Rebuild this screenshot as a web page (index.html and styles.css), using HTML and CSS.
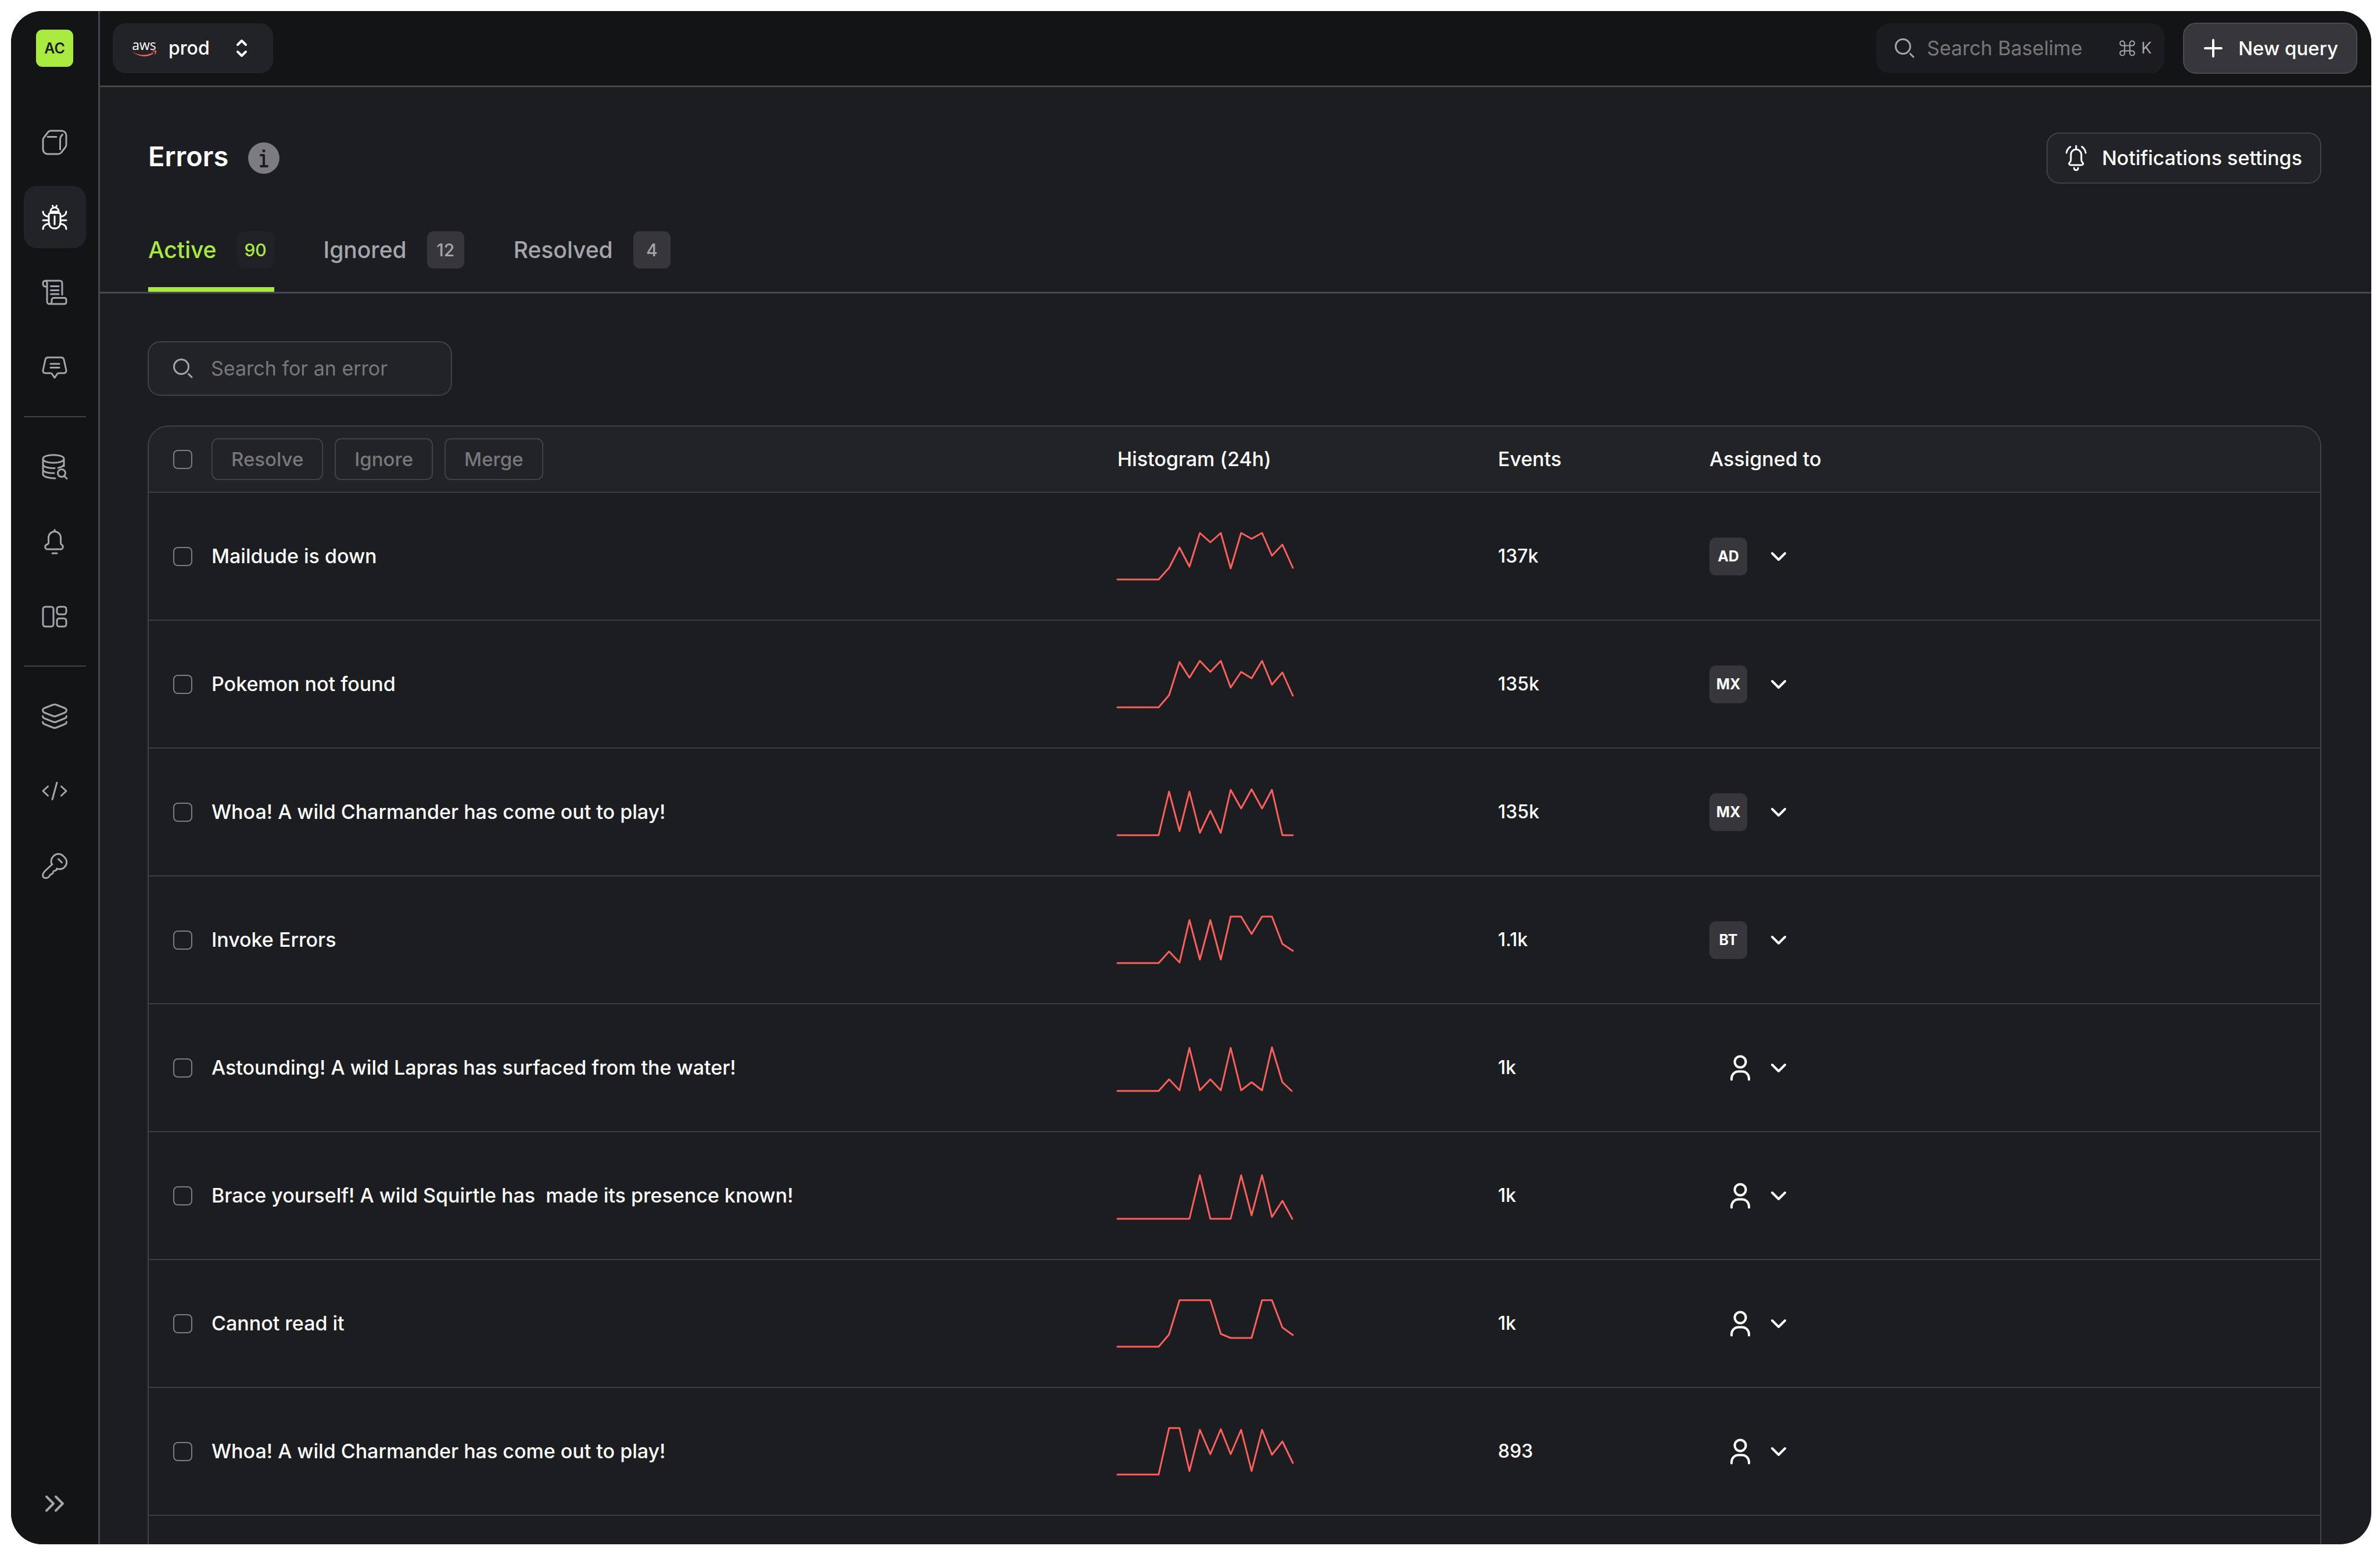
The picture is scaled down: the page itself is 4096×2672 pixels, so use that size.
FILE: index.html
```html
<!DOCTYPE html>
<html lang="en">
<head>
<meta charset="utf-8">
<title>Errors</title>
<meta name="viewport" content="width=device-width, initial-scale=1">
<link rel="stylesheet" href="styles.css">
</head>
<body>
<svg class="sprite" aria-hidden="true">
  <symbol id="cube" viewBox="0 0 48 48"><path d="M17 4H36a8 8 0 0 1 8 8V28q0 3-2 5l-7 9q-2 2-5 2H12a8 8 0 0 1-8-8V20q0-3 2-5l7-9q2-2 4-2zM12 14.500H27M33.500 36V20q0-6 4-9.500"/></symbol>
  <symbol id="bug" viewBox="0 0 48 48"><path d="M17 16.500H31a3 3 0 0 1 3 3V32c0 7-4 11-10 11s-10-4-10-11V19.500a3 3 0 0 1 3-3zM17 16v-2c0-4 3-7 7-7s7 3 7 7v2M17 14H31M22 7.500l-1.500-3.500M26 7.500l1.500-3.500M24 22V36M4 14c0 4 3 8 10 9M44 14c0 4-3 8-10 9M4 29H14M34 29H44M4 44c0-5 4-9 11-9M44 44c0-5-4-9-11-9"/></symbol>
  <symbol id="scroll" viewBox="0 0 48 48"><path d="M11 14H8a4 4 0 0 1-4-4V8a3.500 4 0 0 1 7 0V40a4 4 0 0 0 8 0V37a3.500 3.500 0 0 1 3.500-3.500H41a3 3 0 0 1 3 3V41a3 3 0 0 1-3 3H15M7.500 4H33a4 4 0 0 1 4 4V28M17.500 13.500H31M17.500 20.500H31M17.500 27H31"/></symbol>
  <symbol id="message" viewBox="0 0 48 48"><path d="M13 7H35a5 5 0 0 1 5 4l4 18a4 4 0 0 1-4 5H31q-2 0-3 2l-4 6-4-6q-1-2-3-2H8a4 4 0 0 1-4-5l4-18a5 5 0 0 1 5-4zM17 18H32M17 24.500H32"/></symbol>
  <symbol id="database" viewBox="0 0 48 48"><path d="M4 10.500c0-9 36-9 36 0s-36 9-36 0V37c0 4 10 7 21 7M40 10.500V23M4 20c0 5 12 7 20 6.500M40 20c-1 3-5 5-10 6M4 29c0 4 10 6.500 19 6M41 40.500l4 4"/><circle cx="36" cy="35" r="6.500"/></symbol>
  <symbol id="bell" viewBox="0 0 48 48"><path d="M24 3.500V6M13.500 17a10.500 10.500 0 0 1 21 0V26q0 2 2 3.500c3 2 2 7.500-2 7.500H11.500c-4 0-5-5.500-2-7.500q4-1.500 4-3.500zM20 44H28"/></symbol>
  <symbol id="layout" viewBox="0 0 48 48"><rect x="4" y="7" width="18" height="34" rx="4"/><rect x="28" y="7" width="16" height="13" rx="4"/><rect x="28" y="27" width="16" height="14" rx="4"/></symbol>
  <symbol id="layers" viewBox="0 0 48 48"><path d="M21.500 4.500q2.500-1 5 0L42 10.500q5 3.500 0 7.500L26.500 24q-2.500 1-5 0L6 18q-5-4 0-7.500zM3.500 24q0 3 3 4l15 6q2.500 1 5 0l15-6q3-1 3-4M3.500 34q0 3 3 4l15 6q2.500 1 5 0l15-6q3-1 3-4"/></symbol>
  <symbol id="code" viewBox="0 0 48 48"><path d="M12.500 16L4 24l8.500 8M35.500 16L44 24l-8.500 8M28 9.500L20 38.500"/></symbol>
  <symbol id="key" viewBox="0 0 48 48"><path d="M19 21C17 17 18 11 22 7c5-5 12-5 17 0l2 2c5 5 5 12 0 17-4 4-9 4-13.500 2.500q0 3-2.500 3.500c-4 0-3 2-4 4-1 3-4 1-5.500 4.500C14 44 10 45 7 44.500 4 44 3 41 4 38s2-4 4-6L20 21zM30.500 12L36.500 18"/></symbol>
  <symbol id="expand" viewBox="0 0 48 48"><path d="M10 12L22 24 10 36M26 12L38 24 26 36"/></symbol>
  <symbol id="search" viewBox="0 0 36 36"><circle cx="15" cy="15" r="12.500"/><path d="M27.500 27.500l5.500 5.500"/></symbol>
  <symbol id="command" viewBox="0 0 28 28"><path d="M9.500 9.500H18.500V18.500H9.500zM9.500 9.500H6a4 4 0 1 1 3.500-4zM18.500 9.500V5.500a4 4 0 1 1 3.500 4zM18.500 18.500H22a4 4 0 1 1-3.500 4zM9.500 18.500V22.500a4 4 0 1 1-3.500-4z"/></symbol>
  <symbol id="plus" viewBox="0 0 34 34"><path d="M17 3V31M3 17H31"/></symbol>
  <symbol id="alarm" viewBox="0 0 48 48"><path d="M24 3V7M15 18a9 9 0 0 1 18 0V27q0 3 2 4.500c2 2 1 4.500-2 4.500H15c-3 0-4-2.500-2-4.500q2-1.500 2-4.500zM20.500 41c0 5 7 5 7 0M14 4.500Q8 9 7.500 15M34 4.500Q40 9 40.500 15"/></symbol>
  <symbol id="updown" viewBox="0 0 20 32"><path d="M3 10L10 3 17 10M3 22L10 29 17 22"/></symbol>
  <symbol id="down" viewBox="0 0 30 18"><path d="M4 4L15 15 26 4"/></symbol>
  <symbol id="person" viewBox="0 0 36 48"><circle cx="18" cy="14" r="9.500"/><path d="M3 44.500V43c0-7 5-12.500 12-12.500h6c7 0 12 5.500 12 12.500v1.500"/></symbol>
</svg>

<div class="shell">
  <aside class="sidebar">
    <a class="avatar" href="#account">AC</a>
    <nav class="nav" aria-label="Main">
      <a class="nav-item" href="#services" aria-label="Services"><svg class="icon"><use href="#cube"/></svg></a>
      <a class="nav-item active" href="#errors" aria-label="Errors" aria-current="page"><svg class="icon"><use href="#bug"/></svg></a>
      <a class="nav-item" href="#logs" aria-label="Logs"><svg class="icon"><use href="#scroll"/></svg></a>
      <a class="nav-item" href="#messages" aria-label="Messages"><svg class="icon"><use href="#message"/></svg></a>
      <hr class="divider">
      <a class="nav-item" href="#queries" aria-label="Queries"><svg class="icon"><use href="#database"/></svg></a>
      <a class="nav-item" href="#alerts" aria-label="Alerts"><svg class="icon"><use href="#bell"/></svg></a>
      <a class="nav-item" href="#dashboards" aria-label="Dashboards"><svg class="icon"><use href="#layout"/></svg></a>
      <hr class="divider">
      <a class="nav-item" href="#datasets" aria-label="Datasets"><svg class="icon"><use href="#layers"/></svg></a>
      <a class="nav-item" href="#code" aria-label="Code"><svg class="icon"><use href="#code"/></svg></a>
      <a class="nav-item" href="#keys" aria-label="Keys"><svg class="icon"><use href="#key"/></svg></a>
    </nav>
    <button class="expand" type="button" aria-label="Expand sidebar"><svg class="icon bold"><use href="#expand"/></svg></button>
  </aside>

  <div class="page">
    <header class="topbar">
      <label class="env">
        <span class="aws">aws<svg class="aws-smile" viewBox="0 0 44 12" aria-hidden="true"><path d="M0 1Q20 13 38 3L37 6Q20 16 0 1zM35 1q5-2 8-1 1 4-3 8l1-6z"/></svg></span>
        <select class="env-select" aria-label="Environment"><option>prod</option></select>
        <svg class="updown"><use href="#updown"/></svg>
      </label>
      <div class="top-actions">
        <label class="global-search">
          <svg class="search-icon"><use href="#search"/></svg>
          <input class="field" type="search" placeholder="Search Baselime" aria-label="Search Baselime">
          <span class="shortcut"><svg class="command"><use href="#command"/></svg>K</span>
        </label>
        <button class="button primary" type="button"><svg class="plus"><use href="#plus"/></svg>New query</button>
      </div>
    </header>

    <main class="content">
      <div class="heading">
        <div class="title-group">
          <h1 class="title">Errors</h1>
          <svg class="info" viewBox="0 0 54 54" role="img" aria-label="About errors"><circle class="info-disc" cx="27" cy="27" r="27"/><circle class="info-dot" cx="27" cy="14.500" r="2.500"/><path class="info-stem" d="M22 22H27V41M22 41H33"/></svg>
        </div>
        <button class="button" type="button"><svg class="icon"><use href="#alarm"/></svg>Notifications settings</button>
      </div>

      <nav class="tabs" aria-label="Error status">
        <a class="tab current" href="#active" aria-current="true">Active <span class="count">90</span></a>
        <a class="tab" href="#ignored">Ignored <span class="count">12</span></a>
        <a class="tab" href="#resolved">Resolved <span class="count">4</span></a>
      </nav>

      <div class="body">
        <label class="error-search">
          <svg class="search-icon"><use href="#search"/></svg>
          <input class="field" type="search" placeholder="Search for an error" aria-label="Search for an error">
        </label>

        <div class="panel">
          <table class="errors">
            <colgroup><col><col class="col-histogram"><col class="col-events"><col class="col-assigned"></colgroup>
            <thead>
              <tr>
                <th scope="col"><div class="lead"><input class="check" type="checkbox" aria-label="Select all"><div class="bulk-actions"><button class="small" type="button">Resolve</button><button class="small" type="button">Ignore</button><button class="small" type="button">Merge</button></div></div></th>
                <th scope="col">Histogram (24h)</th>
                <th scope="col">Events</th>
                <th scope="col">Assigned to</th>
              </tr>
            </thead>
            <tbody>
              <tr>
                <td><label class="lead"><input class="check" type="checkbox">Maildude is down</label></td>
                <td><svg class="spark" viewBox="0 0 304 84"><polyline points="0,82 71,82 89,62 107,27 124,60 142,2 160,18 178,2 195,63 213,2 231,12 249,2 266,41 284,22 302,62"/></svg></td>
                <td class="number">137k</td>
                <td><label class="assignee"><select class="initials" aria-label="Assigned to"><option>AD</option><option>BT</option><option>MX</option></select><svg class="down"><use href="#down"/></svg></label></td>
              </tr>
              <tr>
                <td><label class="lead"><input class="check" type="checkbox">Pokemon not found</label></td>
                <td><svg class="spark" viewBox="0 0 304 84"><polyline points="0,82 71,82 89,61 107,4 124,31 142,2 160,21 178,2 195,48 213,21 231,32 249,2 266,43 284,22 302,62"/></svg></td>
                <td class="number">135k</td>
                <td><label class="assignee"><select class="initials" aria-label="Assigned to"><option>MX</option><option>AD</option><option>BT</option></select><svg class="down"><use href="#down"/></svg></label></td>
              </tr>
              <tr>
                <td><label class="lead"><input class="check" type="checkbox">Whoa! A wild Charmander has come out to play!</label></td>
                <td><svg class="spark" viewBox="0 0 304 84"><polyline points="0,82 71,82 89,7 107,75 124,7 142,78 160,40 178,78 195,4 213,36 231,3 249,36 266,4 284,82 302,82"/></svg></td>
                <td class="number">135k</td>
                <td><label class="assignee"><select class="initials" aria-label="Assigned to"><option>MX</option><option>AD</option><option>BT</option></select><svg class="down"><use href="#down"/></svg></label></td>
              </tr>
              <tr>
                <td><label class="lead"><input class="check" type="checkbox">Invoke Errors</label></td>
                <td><svg class="spark" viewBox="0 0 304 84"><polyline points="0,82 71,82 89,62 107,81 124,8 142,76 160,8 178,76 195,2 213,2 231,32 249,2 266,2 284,49 302,61"/></svg></td>
                <td class="number">1.1k</td>
                <td><label class="assignee"><select class="initials" aria-label="Assigned to"><option>BT</option><option>AD</option><option>MX</option></select><svg class="down"><use href="#down"/></svg></label></td>
              </tr>
              <tr>
                <td><label class="lead"><input class="check" type="checkbox">Astounding! A wild Lapras has surfaced from the water!</label></td>
                <td><svg class="spark" viewBox="0 0 304 84"><polyline points="0,82 71,82 89,62 107,81 124,8 142,81 160,62 178,81 195,8 213,81 231,67 249,81 266,7 284,67 300,82"/></svg></td>
                <td class="number">1k</td>
                <td><button class="assignee unassigned" type="button" aria-label="Assign"><svg class="person"><use href="#person"/></svg><svg class="down"><use href="#down"/></svg></button></td>
              </tr>
              <tr>
                <td><label class="lead"><input class="check" type="checkbox">Brace yourself! A wild Squirtle has &nbsp;made its presence known!</label></td>
                <td><svg class="spark" viewBox="0 0 304 84"><polyline points="0,82 124,82 142,7 160,82 195,82 213,7 231,76 249,7 266,79 284,51 301,82"/></svg></td>
                <td class="number">1k</td>
                <td><button class="assignee unassigned" type="button" aria-label="Assign"><svg class="person"><use href="#person"/></svg><svg class="down"><use href="#down"/></svg></button></td>
              </tr>
              <tr>
                <td><label class="lead"><input class="check" type="checkbox">Cannot read it</label></td>
                <td><svg class="spark" viewBox="0 0 304 84"><polyline points="0,82 71,82 89,61 107,2 160,2 178,60 195,67 231,67 249,2 266,2 284,49 302,62"/></svg></td>
                <td class="number">1k</td>
                <td><button class="assignee unassigned" type="button" aria-label="Assign"><svg class="person"><use href="#person"/></svg><svg class="down"><use href="#down"/></svg></button></td>
              </tr>
              <tr>
                <td><label class="lead"><input class="check" type="checkbox">Whoa! A wild Charmander has come out to play!</label></td>
                <td><svg class="spark" viewBox="0 0 304 84"><polyline points="0,82 71,82 89,2 107,2 124,76 142,5 160,47 178,4 195,47 213,5 231,76 249,5 266,48 284,25 302,62"/></svg></td>
                <td class="number">893</td>
                <td><button class="assignee unassigned" type="button" aria-label="Assign"><svg class="person"><use href="#person"/></svg><svg class="down"><use href="#down"/></svg></button></td>
              </tr>
            </tbody>
          </table>
        </div>
      </div>
    </main>
  </div>
</div>
</body>
</html>
```
FILE: styles.css
```css
* {
  box-sizing: border-box;
}

body {
  margin: 0;
  height: 100vh;
  padding: 19px 15px 15px 19px;
  background: #ffffff;
  color: #ffffff;
  font: 500 34px/48px Inter, "Liberation Sans", sans-serif;
}

button,
input,
select {
  margin: 0;
  font: inherit;
  color: inherit;
}

button {
  cursor: pointer;
}

a {
  color: inherit;
  text-decoration: none;
}

svg {
  flex: none;
  display: block;
  fill: none;
  stroke: currentColor;
  stroke-width: 3;
  stroke-linecap: round;
  stroke-linejoin: round;
}

.sprite {
  position: absolute;
  width: 0;
  height: 0;
}

.icon {
  width: 48px;
  height: 48px;
}

.bold {
  stroke-width: 4;
}

.shell {
  display: flex;
  height: 100%;
  overflow: hidden;
  border-radius: 54px;
  background: #1c1d21;
}

/* Sidebar */

.sidebar {
  flex: none;
  display: flex;
  flex-direction: column;
  align-items: center;
  width: 153px;
  padding: 32px 0 46px;
  border-right: 3px solid #47484c;
  background: #131416;
  color: #a5a5ac;
}

.avatar {
  display: flex;
  align-items: center;
  justify-content: center;
  width: 64px;
  height: 64px;
  margin-bottom: 76px;
  border-radius: 11px;
  background: #a9ea41;
  color: #1c1d21;
  font-size: 25px;
  font-weight: 600;
}

.nav {
  display: flex;
  flex-direction: column;
  gap: 22px;
}

.nav-item {
  display: flex;
  align-items: center;
  justify-content: center;
  width: 107px;
  height: 107px;
  border-radius: 22px;
}

.nav-item.active {
  background: #222327;
  color: #ffffff;
}

.divider {
  width: 100%;
  height: 2px;
  margin: 9px 0;
  border: 0;
  background: #414246;
}

.expand {
  margin-top: auto;
  padding: 0;
  border: 0;
  background: none;
}

/* Top bar */

.page {
  flex: 1;
  display: flex;
  flex-direction: column;
  min-width: 0;
}

.topbar {
  flex: none;
  display: flex;
  align-items: center;
  justify-content: space-between;
  height: 131px;
  padding: 0 24px 0 22px;
  border-bottom: 3px solid #47484c;
  background: #131416;
}

.env {
  display: flex;
  align-items: center;
  width: 276px;
  height: 86px;
  padding: 0 44px 0 32px;
  border-radius: 22px;
  background: #222327;
}

.aws {
  display: flex;
  flex-direction: column;
  align-items: center;
  width: 44px;
  font: 500 23px/20px "Open Sans", sans-serif;
}

.aws-smile {
  width: 44px;
  height: 12px;
  fill: #fd5f5b;
  stroke: none;
}

.env-select {
  appearance: none;
  flex: 1;
  min-width: 0;
  padding: 0 0 0 20px;
  border: 0;
  background: none;
  font-size: 32px;
}

.updown {
  width: 20px;
  height: 32px;
  stroke-width: 4;
}

.top-actions {
  display: flex;
  align-items: center;
  gap: 32px;
}

.global-search,
.error-search {
  display: flex;
  align-items: center;
  border-radius: 22px;
}

.global-search {
  gap: 20px;
  width: 496px;
  height: 86px;
  padding: 0 22px 0 31px;
  background: #1b1c1f;
}

.search-icon {
  width: 36px;
  height: 36px;
  color: #a5a5ac;
}

.field {
  appearance: none;
  flex: 1;
  min-width: 0;
  padding: 0;
  border: 0;
  outline: 0;
  background: none;
  font-weight: 400;
}

.field::placeholder {
  color: #77787c;
  opacity: 1;
}

.shortcut {
  display: flex;
  align-items: center;
  gap: 10px;
  color: #a5a5ac;
  font-size: 27px;
  font-weight: 400;
}

.command {
  width: 28px;
  height: 28px;
  stroke-width: 2;
}

.button {
  display: flex;
  align-items: center;
  gap: 20px;
  height: 88px;
  padding: 0 31px 0 25px;
  border: 2px solid #414246;
  border-radius: 22px;
  background: #222327;
}

.button.primary {
  gap: 26px;
  padding: 0 31px 0 33px;
  border-color: #4b4a4f;
  background: #37363b;
  font-size: 33px;
}

.plus {
  width: 34px;
  height: 34px;
  stroke-width: 4;
}

/* Page heading and tabs */

.content {
  flex: 1;
  display: flex;
  flex-direction: column;
  min-height: 0;
}

.heading {
  flex: none;
  display: flex;
  align-items: center;
  justify-content: space-between;
  padding: 78px 86px 0 83px;
}

.title-group {
  display: flex;
  align-items: center;
  gap: 34px;
}

.title {
  margin: 0;
  padding-bottom: 6px;
  font-size: 47px;
  font-weight: 600;
  line-height: 64px;
}

.info {
  width: 54px;
  height: 54px;
}

.info-disc {
  fill: #7b7b80;
  stroke: none;
}

.info-dot {
  fill: #1c1d21;
  stroke: none;
}

.info-stem {
  stroke: #1c1d21;
  stroke-width: 4;
}

.tabs {
  flex: none;
  display: flex;
  gap: 85px;
  padding: 82px 86px 0 83px;
  border-bottom: 3px solid #47484c;
}

.tab {
  display: flex;
  align-items: flex-start;
  gap: 35px;
  height: 104px;
  color: #a5a5ac;
  font-size: 39px;
  line-height: 64px;
}

.tab.current {
  border-bottom: 8px solid #a9ea41;
  border-radius: 3px 3px 0 0;
  color: #a9ea41;
}

.count {
  min-width: 64px;
  border-radius: 11px;
  background: #37363b;
  font-size: 30px;
  text-align: center;
}

.current .count {
  background: #202125;
}

/* Error list */

.body {
  flex: 1;
  display: flex;
  flex-direction: column;
  align-items: flex-start;
  gap: 51px;
  min-height: 0;
  padding: 82px 86px 0 82px;
}

.error-search {
  flex: none;
  gap: 30px;
  width: 524px;
  height: 94px;
  padding: 0 41px;
  border: 2px solid #414246;
  background: #222327;
}

.panel {
  flex: 1;
  width: 100%;
  border: 2px solid #414246;
  border-bottom: 0;
  border-radius: 36px 36px 0 0;
  overflow: hidden;
}

.errors {
  width: 100%;
  border-collapse: separate;
  border-spacing: 0;
  table-layout: fixed;
}

.col-histogram {
  width: 655px;
}

.col-events {
  width: 364px;
}

.col-assigned {
  width: 1051px;
}

.errors th,
.errors td {
  height: 220px;
  padding: 0;
  border-bottom: 2px solid #3c3d41;
  font-weight: 500;
  text-align: left;
  vertical-align: middle;
}

.errors th {
  height: 114px;
  background: #222327;
}

.errors .number {
  font-size: 32px;
}

.lead {
  display: flex;
  align-items: center;
  gap: 33px;
  padding-left: 42px;
}

.bulk-actions {
  display: flex;
  gap: 20px;
}

.check {
  appearance: none;
  flex: none;
  width: 33px;
  height: 33px;
  border: 2px solid #7b7b80;
  border-radius: 8px;
}

.small {
  height: 72px;
  padding: 0 32px;
  border: 2px solid #414246;
  border-radius: 11px;
  background: none;
  color: #77787c;
  font-size: 33px;
}

.spark {
  width: 304px;
  height: 84px;
  overflow: visible;
  stroke: #fd5f5b;
}

.assignee {
  display: flex;
  align-items: center;
  gap: 39px;
  width: 134px;
  padding: 0;
  border: 0;
  background: none;
}

.unassigned {
  gap: 33px;
  padding-left: 35px;
}

.initials {
  appearance: none;
  width: 65px;
  height: 65px;
  padding: 0;
  border: 0;
  border-radius: 11px;
  background: #37363b;
  font-size: 25px;
  font-weight: 700;
  text-align: center;
  text-align-last: center;
}

.down {
  width: 30px;
  height: 18px;
  stroke-width: 4;
}

.person {
  width: 36px;
  height: 48px;
  stroke-width: 4;
}
```
